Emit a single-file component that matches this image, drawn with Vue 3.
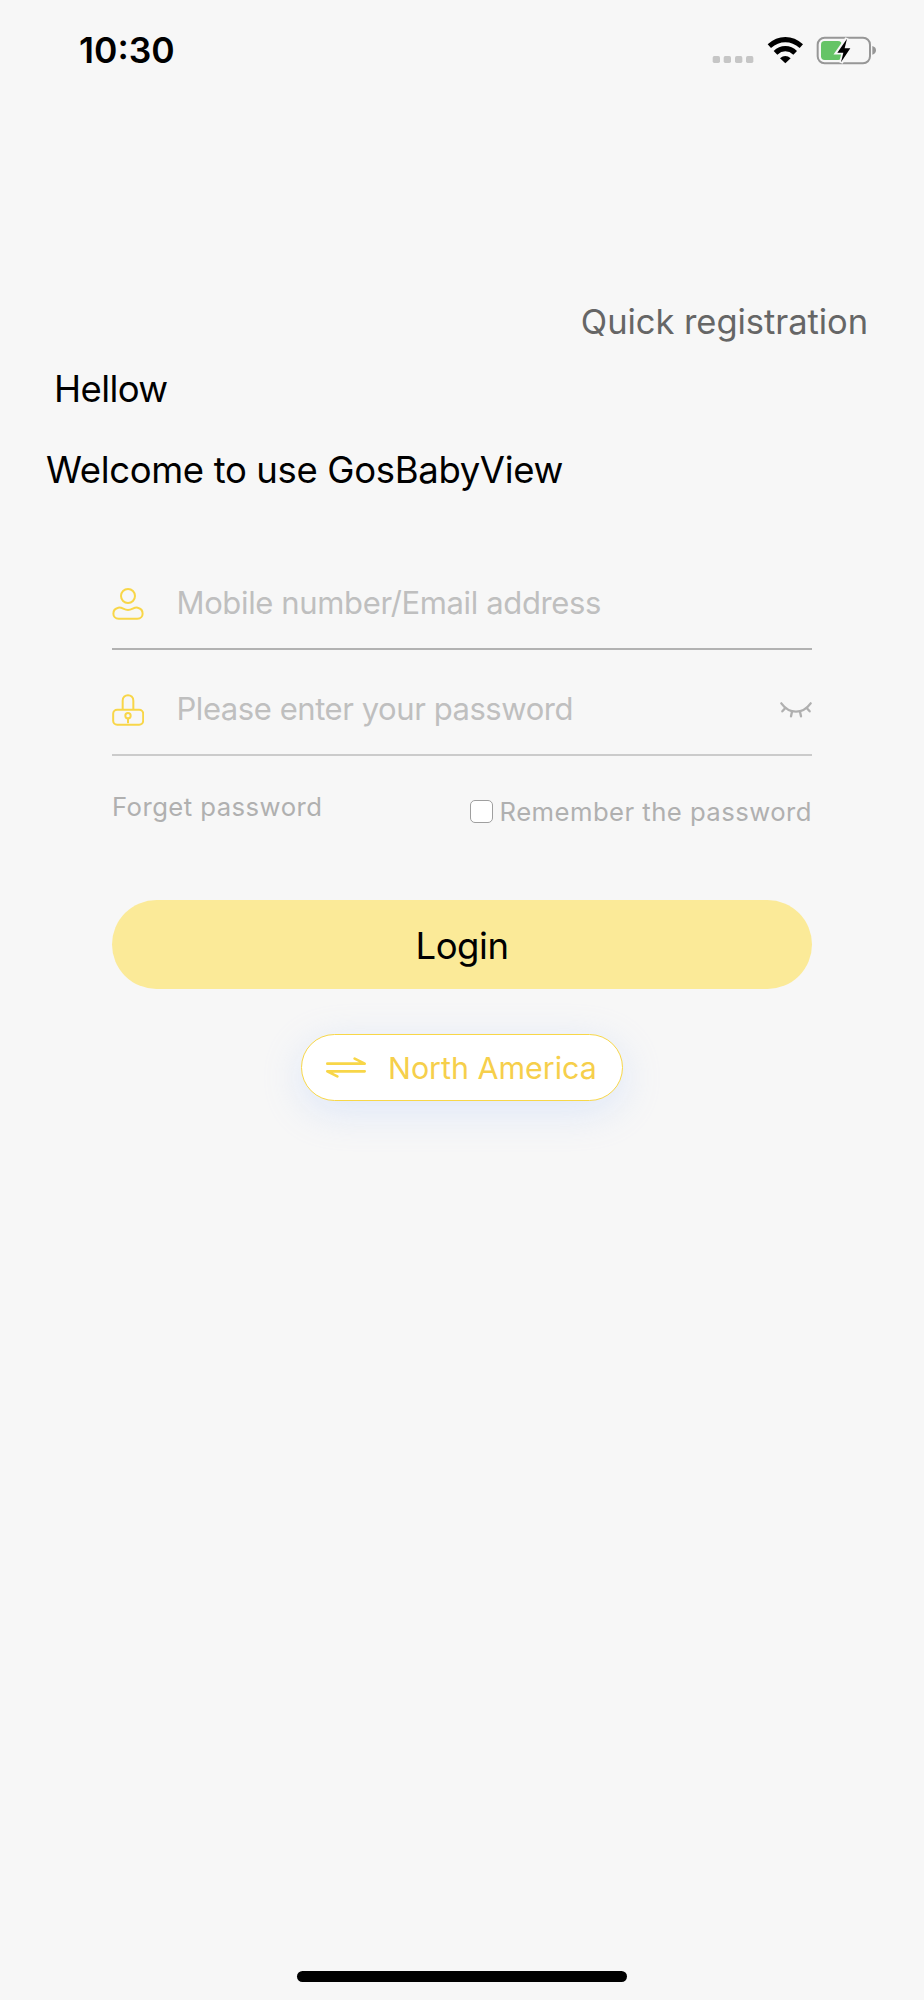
<script setup>
import { ref } from 'vue'

const account = ref('')
const password = ref('')
const remember = ref(false)
const region = ref('North America')
</script>

<template>
  <main class="screen">
    <header class="status">
      <span class="time">10:30</span>
      <svg class="status-icons" viewBox="36 45 495 90" width="165" height="30">
        <g fill="#c6c6c6">
          <rect x="38" y="108" width="22" height="21" rx="5" />
          <rect x="71" y="108" width="22" height="21" rx="5" />
          <rect x="105" y="108" width="22" height="21" rx="5" />
          <rect x="138" y="108" width="22" height="21" rx="5" />
        </g>
        <g fill="#000">
          <path d="M203 73 Q227 51 256 51 Q285 51 309 73 L299 84 Q279 67 256 67 Q233 67 213 84 Z" />
          <path d="M221 93 Q236 78 256 78 Q276 78 291 93 L280 104 Q269 94 256 94 Q243 94 232 104 Z" />
          <path d="M256 130 L240 115 Q256 101 272 115 Z" />
        </g>
        <rect x="353" y="53" width="157" height="77" rx="21" fill="none" stroke="#979797" stroke-width="6" />
        <path d="M517 78 Q528 81 528 91 Q528 101 517 104 Z" fill="#979797" />
        <rect x="363" y="63" width="62" height="57" rx="11" fill="#65c466" />
        <path d="M441 55 L411 98 H430 L423 128 L452 85 H434 Z" fill="#f7f7f7" stroke="#f7f7f7" stroke-width="11" />
        <path d="M441 56 L412 98 H430 L423 127 L451 85 H434 Z" fill="#000" />
      </svg>
    </header>

    <a class="register">Quick registration</a>
    <h1 class="hello">Hellow</h1>
    <h2 class="welcome">Welcome to use GosBabyView</h2>

    <form class="form" @submit.prevent>
      <label class="field">
        <svg class="lead" viewBox="0 0 96 96" width="32" height="32" fill="none" stroke="#f8d648" stroke-width="6">
          <circle cx="48" cy="24" r="21" />
          <path d="M19 59 C31 57 35 66 48 66 C61 66 65 57 77 59 C97 63 97 92 76 92 H20 C-1 92 -1 63 19 59 Z" />
        </svg>
        <input v-model="account" class="account" type="text" placeholder="Mobile number/Email address" />
      </label>
      <label class="field second">
        <svg class="lead" viewBox="0 0 96 96" width="32" height="32" fill="none" stroke="#f8d648" stroke-width="6">
          <path d="M32 46 V20 C32 -2 64 -2 64 20 V46" />
          <rect x="3.500" y="47" width="90" height="45" rx="12" />
          <circle cx="48" cy="65" r="8" />
          <path d="M48 73 V88" />
        </svg>
        <input v-model="password" class="pass" type="password" placeholder="Please enter your password" />
        <svg class="eye" viewBox="0 0 96 48" width="32" height="16" fill="none" stroke="#b0b0b0" stroke-width="7" stroke-linecap="round">
          <path d="M4 4 C28 37 68 37 92 4" />
          <path d="M16 18 L7 28 M36 29 L33 43 M60 29 L63 43 M80 18 L89 28" />
        </svg>
      </label>

      <div class="options">
        <a class="forget">Forget password</a>
        <label class="remember">
          <input v-model="remember" class="check" type="checkbox" />
          <span>Remember the password</span>
        </label>
      </div>

      <button class="login" type="submit">Login</button>
      <button class="region" type="button">
        <svg viewBox="0 0 120 62" width="40" height="20.700" fill="none" stroke="#f8d648" stroke-width="8" stroke-linecap="round" stroke-linejoin="round">
          <path d="M4 20 H116 L86 5" />
          <path d="M116 43 H4 L34 58" />
        </svg>
        <span>{{ region }}</span>
      </button>
    </form>

    <div class="home-bar"></div>
  </main>
</template>

<style>
body {
  background: #f7f7f7;
}
</style>

<style scoped>
.screen {
  box-sizing: border-box;
  width: 924px;
  height: 2000px;
  display: flex;
  flex-direction: column;
  background: #f7f7f7;
  color: #000;
  font-family: Inter, "Liberation Sans", sans-serif;
  overflow: hidden;
}
.status {
  display: flex;
  justify-content: space-between;
  align-items: center;
  height: 30px;
  margin: 35px 47px 0 79px;
}
.time {
  font-size: 35.5px;
  font-weight: 600;
  line-height: 42px;
  letter-spacing: 0;
  white-space: nowrap;
  padding-top: 1px;
}
.register {
  align-self: flex-end;
  margin: 236px 56px 0 0;
  font-size: 34.5px;
  line-height: 42px;
  letter-spacing: -0.05px;
  color: #666;
}
.hello,
.welcome {
  margin: 0;
  font-size: 36.5px;
  font-weight: 400;
  line-height: 44px;
  white-space: nowrap;
}
.hello {
  margin: 24px 0 0 54px;
  letter-spacing: -0.6px;
}
.welcome {
  margin: 37px 0 0 46px;
  letter-spacing: -0.35px;
}
.form {
  display: flex;
  flex-direction: column;
  margin: 66px 112px 0;
}
.field {
  box-sizing: border-box;
  display: flex;
  align-items: center;
  height: 92px;
  border-bottom: 2px solid #b2b2b2;
}
.second {
  height: 106px;
  padding-top: 14px;
  border-bottom-color: #cbcbcb;
}
.lead {
  flex: none;
  margin: 1px 33px 0 -0.5px;
}
.field input {
  flex: 1;
  min-width: 0;
  height: 44px;
  padding: 0;
  border: 0;
  outline: 0;
  background: transparent;
  font: 31px/44px Inter, "Liberation Sans", sans-serif;
  letter-spacing: -0.36px;
}
.field input.pass {
  letter-spacing: -0.44px;
}
.field input::placeholder {
  color: #bfbfbf;
  opacity: 1;
}
.eye {
  flex: none;
  margin-top: 2px;
}
.options {
  display: flex;
  justify-content: space-between;
  align-items: flex-start;
  margin-top: 35px;
  font-size: 25.7px;
  line-height: 32px;
  letter-spacing: 0.45px;
  color: #b0b0b0;
}
.remember {
  display: flex;
  align-items: center;
  gap: 7px;
  margin-top: 5px;
}
.check {
  appearance: none;
  box-sizing: border-box;
  width: 23px;
  height: 23px;
  margin: 0 0 1px;
  border: 1.5px solid #9f9f9f;
  border-radius: 5px;
  background: #fff;
}
.login {
  height: 89px;
  margin-top: 72px;
  padding: 2px 0 0;
  border: 0;
  border-radius: 45px;
  background: #fbea98;
  color: #000;
  font: 36.5px/44px Inter, "Liberation Sans", sans-serif;
  letter-spacing: -0.45px;
}
.region {
  box-sizing: border-box;
  align-self: center;
  display: flex;
  align-items: center;
  gap: 22px;
  width: 322px;
  height: 67px;
  margin-top: 45px;
  padding: 0 0 0 24px;
  border: 1.5px solid #f8d748;
  border-radius: 34px;
  background: #fff;
  box-shadow: 0 10px 40px rgba(190, 210, 250, 0.45);
  color: #f6cf4b;
  font: 30.4px/40px Inter, "Liberation Sans", sans-serif;
  white-space: nowrap;
}
.home-bar {
  width: 330px;
  height: 11px;
  margin: auto auto 18px;
  border-radius: 6px;
  background: #000;
}
</style>
